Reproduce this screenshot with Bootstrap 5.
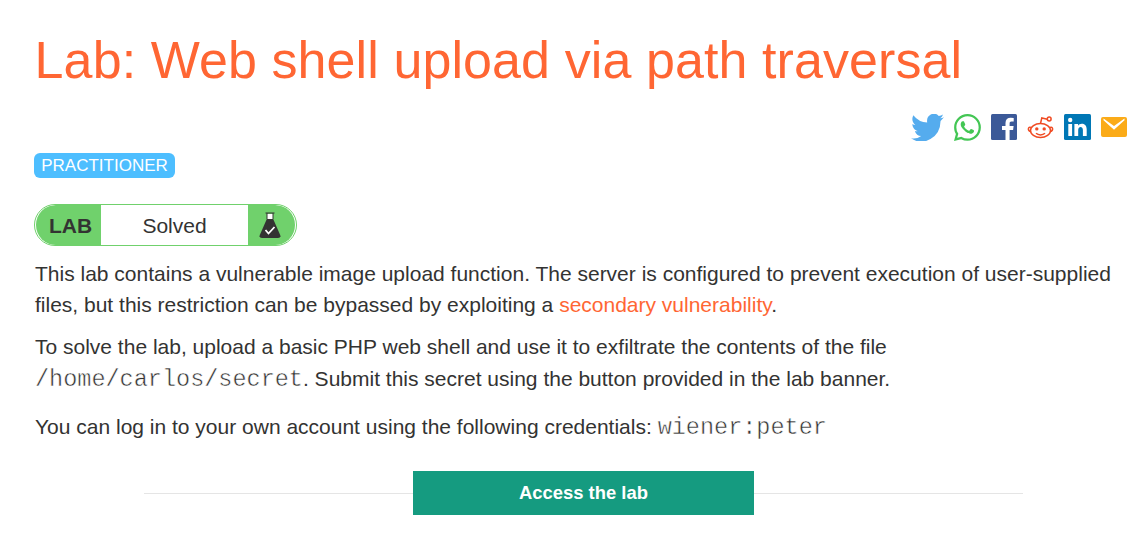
<!DOCTYPE html>
<html lang="en">
<head>
<meta charset="utf-8">
<meta name="viewport" content="width=device-width, initial-scale=1">
<title>Lab: Web shell upload via path traversal</title>
<link rel="stylesheet" href="https://cdn.jsdelivr.net/npm/bootstrap@5.3.0/dist/css/bootstrap.min.css">
<style>
body{font-family:"Liberation Sans",Arial,sans-serif;color:#333332;background:#fff;font-size:21px;line-height:31.5px;overflow:hidden}
.lab-page{padding:28px 18px 0 35px}
h1{font-size:52px;line-height:64px;color:#ff6633;font-weight:400;letter-spacing:.09px;white-space:nowrap;margin-left:-.4px}
.share{height:28px;margin:21px 2px 0 0;gap:10px}
.level{background:#4dbeff;color:#fff;font-size:17px;line-height:25px;height:25px;width:141px;border-radius:6px;margin:12px 0 0 -1px}
.status{width:263px;height:42px;border:1px solid #70d16c;border-radius:21px;margin:26px 0 0 -1px;padding:0 1px;background:#fff;overflow:hidden}
.status-tag{width:65px;background:#70d16c;border-radius:20px 0 0 20px;padding:2px 0 0 4px}
.status-label{padding-top:2px}
.status-icon{width:47px;background:#70d16c;border-radius:0 20px 20px 0;padding-right:4px}
.description{margin-top:12px}
.description p{white-space:nowrap}
.description a{color:#ff6633}
.p-one{line-height:31px;margin-bottom:11px}
.p-two{margin-bottom:16.5px}
code{font-family:"Liberation Mono","Courier New",monospace;font-size:23.5px;line-height:1;color:#333332;-webkit-text-stroke:.5px #fff}
.launch{margin:29px 106px 0 109px}
.launch .rule{height:1px;background:#e5e5e5}
.launch .btn{width:341px;height:44px;background:#159b80;color:#fff;font-size:18.4px}
</style>
</head>
<body>
<main class="lab-page">
<h1 class="mb-0">Lab: Web shell upload via path traversal</h1>
<div class="share d-flex justify-content-end align-items-center">
<svg width="33" height="27" viewBox="0 0 24 18" preserveAspectRatio="none" fill="#55acee"><path d="M24 2.100a9.500 9.500 0 0 1-2.800.8A5 5 0 0 0 23.300.300a10 10 0 0 1-3.100 1.100A4.900 4.900 0 0 0 11.800 5.700 14 14 0 0 1 1.700.800C.3 3.200 1 5.900 3.200 7.200A5 5 0 0 1 1 6.600c0 2.300 1.700 4.200 4 4.700a5 5 0 0 1-2.200.1 4.900 4.900 0 0 0 4.600 3.300A9.900 9.900 0 0 1 0 16.200 14 14 0 0 0 21.500 4.600z"/></svg>
<svg width="27" height="27" viewBox="0 0 16 16" fill="#43c654"><path d="M13.601 2.326A7.854 7.854 0 0 0 7.994 0C3.627 0 .068 3.558.064 7.926c0 1.399.366 2.760 1.057 3.965L0 16l4.204-1.102a7.933 7.933 0 0 0 3.790.965h.004c4.368 0 7.926-3.558 7.930-7.930A7.898 7.898 0 0 0 13.600 2.326zM7.994 14.521a6.573 6.573 0 0 1-3.356-.920l-.240-.144-2.494.654.666-2.433-.156-.251a6.560 6.560 0 0 1-1.007-3.505c0-3.626 2.957-6.584 6.591-6.584a6.560 6.560 0 0 1 4.660 1.931 6.557 6.557 0 0 1 1.928 4.660c-.004 3.639-2.961 6.592-6.592 6.592z"/><path d="M11.610 9.585c-.197-.099-1.170-.578-1.353-.646-.182-.065-.315-.099-.445.099-.133.197-.513.646-.627.775-.114.133-.232.148-.430.050-.197-.100-.836-.308-1.592-.985-.590-.525-.985-1.175-1.103-1.372-.114-.198-.011-.304.088-.403.087-.088.197-.232.296-.346.100-.114.133-.198.198-.330.065-.134.034-.248-.015-.347-.050-.099-.445-1.076-.612-1.470-.160-.389-.323-.335-.445-.340-.114-.007-.247-.007-.380-.007a.729.729 0 0 0-.529.247c-.182.198-.691.677-.691 1.654 0 .977.710 1.916.810 2.049.098.133 1.394 2.132 3.383 2.992 1.175.475 1.636.521 2.233.437.364-.054 1.170-.478 1.336-.943.164-.464.164-.860.114-.943-.049-.084-.182-.133-.380-.232z"/></svg>
<svg width="26" height="26" viewBox="0 0 26 26"><rect width="26" height="26" rx="1.500" fill="#3b5998"/><path d="M14.500 26V16H11v-4h3.500V9c0-3.500 2-5.300 5.200-5.300l3 .2v3.500h-2.100c-1.700 0-2 .8-2 2V12h4l-.5 4h-3.500v10z" fill="#fff"/></svg>
<svg width="27" height="27" viewBox="0 0 27 27" fill="none" stroke="#f04b23" stroke-width="1.500"><ellipse cx="13.500" cy="16.500" rx="10" ry="7"/><path d="M4 13.500C1 12 .3 16.500 3.500 17.500M23 13.500c3-1.500 3.700 3 .5 4M13.500 9.500 14.800 4l5.500 1.300M9 19.300c2.500 2.100 6.500 2.100 9 0"/><circle cx="22.200" cy="5" r="1.900"/><g fill="#f04b23" stroke="none"><circle cx="9.800" cy="14.900" r="1.700"/><circle cx="17.200" cy="14.900" r="1.700"/></g></svg>
<svg width="27" height="26" viewBox="0 0 27 26"><rect width="27" height="26" rx="1.500" fill="#0077b5"/><g fill="#fff"><circle cx="6.200" cy="6" r="2.200"/><path d="M4.300 10h3.800v12H4.300zM10.400 10H14v1.700c2-3.200 8.700-2.800 8.700 3.500V22h-3.800v-6c0-4-4.700-3.800-4.700 0v6h-3.800z"/></g></svg>
<svg width="26" height="20" viewBox="0 0 26 20"><rect width="26" height="20" rx="2" fill="#fbab18"/><path d="M2.500 1.500 13 9 23.500 1.500v1.800L13 12.800 2.500 3.300z" fill="#fff"/></svg>
</div>
<div class="level d-flex justify-content-center align-items-center">PRACTITIONER</div>
<div class="status d-flex">
<strong class="status-tag d-flex align-items-center justify-content-center">LAB</strong>
<span class="status-label flex-grow-1 d-flex align-items-center justify-content-center">Solved</span>
<span class="status-icon d-flex align-items-center justify-content-center"><svg width="22" height="27" viewBox="0 0 22 27"><path d="M8 2h6v6H8z" fill="#fff"/><path d="M6.500 1h9M8 1v6M14 1v6" stroke="#333332" stroke-width="1"/><path d="M7.800 7h6.400L21 22.500Q22.500 26 19 26H3Q-.5 26 1 22.500z" fill="#333332"/><path d="m6.500 18 3 3.500 6-6.500" fill="none" stroke="#fff" stroke-width="1.800"/></svg></span>
</div>
<section class="description">
<p class="p-one">This lab contains a vulnerable image upload function. The server is configured to prevent execution of user-supplied<br>files, but this restriction can be bypassed by exploiting a <a href="#" class="text-decoration-none">secondary vulnerability</a>.</p>
<p class="p-two">To solve the lab, upload a basic PHP web shell and use it to exfiltrate the contents of the file<br><code>/home/carlos/secret</code>. Submit this secret using the button provided in the lab banner.</p>
<p class="p-three mb-0">You can log in to your own account using the following credentials: <code>wiener:peter</code></p>
</section>
<div class="launch d-flex align-items-center"><span class="rule flex-grow-1"></span><button type="button" class="btn rounded-0 border-0 p-0 fw-bold">Access the lab</button><span class="rule flex-grow-1"></span></div>
</main>
<script src="https://cdn.jsdelivr.net/npm/bootstrap@5.3.0/dist/js/bootstrap.bundle.min.js"></script>
</body>
</html>
